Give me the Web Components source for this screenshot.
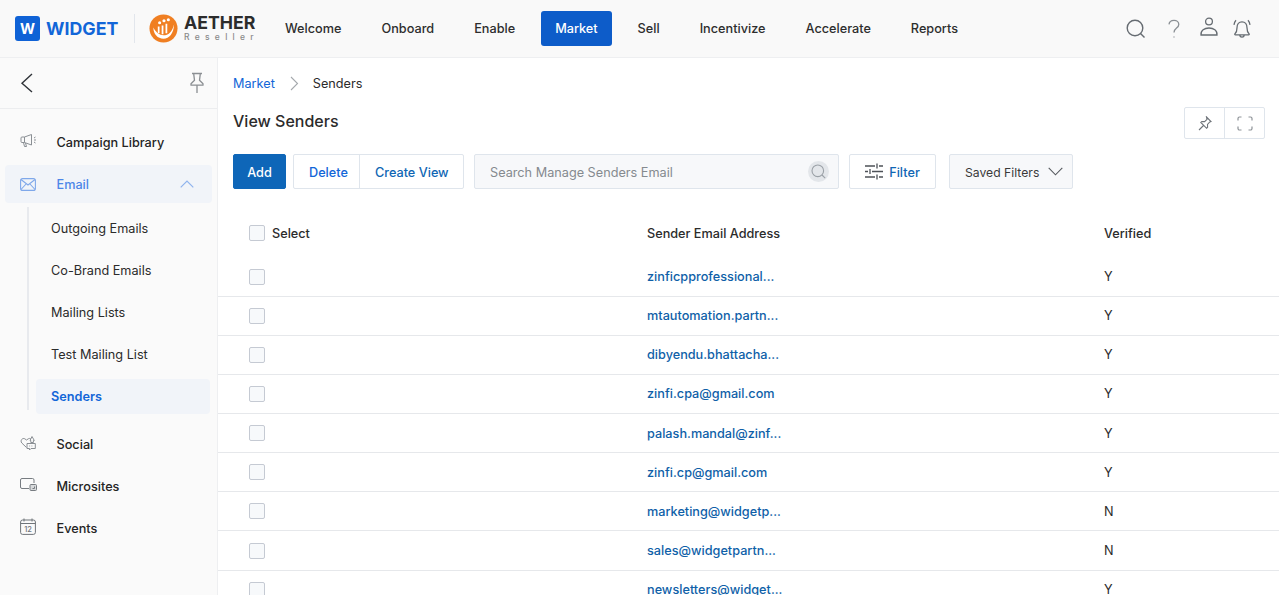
<!DOCTYPE html>
<html lang="en"><head><meta charset="utf-8"><title>View Senders</title>
<style>
html,body{margin:0;height:595px;overflow:hidden;background:#fff;font-family:Inter,"Liberation Sans",sans-serif;font-size:12.7px;color:#2b2b2b}
</style></head><body>
<app-shell></app-shell>
<script>
const ic={
 back:'<svg width="14" height="20" viewBox="0 0 14 20" fill="none" stroke="#2f3338" stroke-width="1.4"><path d="M12 1 2 10.2 12 19"/></svg>',
 pin:'<svg width="16" height="22" viewBox="0 0 16 22" fill="none" stroke="#8b8f93" stroke-width="1.3" stroke-linejoin="round"><path d="M3 1.500h10M4.800 1.500v1.200l.7 5.600L2 11.800v1.400h12v-1.400l-3.500-3.500.7-5.600V1.500M8 13.200V21"/></svg>',
 search:'<svg width="20" height="20" viewBox="0 0 20 20" fill="none" stroke="#666c72" stroke-width="1.4"><circle cx="9" cy="9" r="7.800"/><path d="m14.500 14.500 4 4"/></svg>',
 help:'<svg width="14" height="20" viewBox="0 0 14 20" fill="none" stroke="#8a8f94" stroke-width="1.3"><path d="M2 5.400C2.300 3 4.400 1.400 7 1.400c2.700 0 4.800 1.800 4.800 4 0 3.700-4.800 3.600-4.800 8"/><path d="M7 17.400v1.300" stroke-dasharray="1 .6"/></svg>',
 user:'<svg width="20" height="20" viewBox="0 0 20 20" fill="none" stroke="#666c72" stroke-width="1.3"><circle cx="10" cy="4.500" r="3.400"/><path d="M2 18c-.5-4.600 3.500-7 8-7s8.500 2.400 8 7z"/></svg>',
 bell:'<svg width="22" height="22" viewBox="0 0 22 22" fill="none" stroke="#666c72" stroke-width="1.3"><path d="M4 15.800c1.700-1.500 2-3 2-6 0-3.500 2-6 5-6s5 2.500 5 6c0 3 .3 4.500 2 6 .5.500.2 1-.4 1H4.400c-.6 0-.9-.5-.4-1zM8.800 16.800c0 3 4.400 3 4.400 0M3 6.800C3.300 5 3.900 3.500 5 2.300M19 6.800C18.700 5 18.100 3.500 17 2.300"/></svg>',
 megaphone:'<svg width="17" height="15" viewBox="0 0 17 15" fill="none" stroke="#8a8f94" stroke-width="1"><path d="M11.500 1.500 4.500 4H2a1 1 0 0 0-1 1v3.500a1 1 0 0 0 1 1h2.500l7 2.500zM4.500 4v5.500M3.500 9.500l1 4h2l-1-3.400M14 5l1.500-1M14 7h2M14 9l1.500 1"/></svg>',
 mail:'<svg width="16" height="13" viewBox="0 0 16 13" fill="none" stroke="#7fa8ea" stroke-width="1.100"><rect x=".6" y=".6" width="14.800" height="11.800" rx="2"/><path d="m1 1.500 7 5.500 7-5.500M1 11.500l5-5.500M15 11.500l-5-5.500"/></svg>',
 social:'<svg width="16" height="16" viewBox="0 0 16 16" fill="none" stroke="#8a8f94" stroke-width="1"><path d="M6.500 12.500 1.800 8C-.2 5.500 2.500 2.500 4.800 3.800L6.500 5l1.800-1.200c1-.6 1.900-.4 2.500 0"/><path d="M10 5.500 12 1.500l2.300 4h-.9V7.500h-2.600V5.500zM7 8.500h8.300v5H11L9.500 15v-1.500H7z"/><path d="M9.300 11h.8M11.500 11h.8" /></svg>',
 micro:'<svg width="17" height="13" viewBox="0 0 17 13" fill="none" stroke="#777c81" stroke-width="1"><path d="M9 10.500H2a1.500 1.500 0 0 1-1.500-1.500V2A1.500 1.500 0 0 1 2 .5h10.500A1.500 1.500 0 0 1 14 2v3"/><rect x="10" y="6.500" width="6.500" height="6" rx="1" fill="#d8dadc"/><path d="M14.500 8.500v2h-2"/></svg>',
 cal:'<svg width="16" height="17" viewBox="0 0 16 17" fill="none" stroke="#6f7479" stroke-width="1"><rect x=".6" y="2" width="14.800" height="14.400" rx="2"/><path d="M.6 5.500h14.800M4 .5v3M12 .5v3"/><text x="8" y="14" font-size="7.500" text-anchor="middle" fill="#6f7479" stroke="none" font-family="Inter">12</text></svg>',
 pin2:'<svg width="14" height="15" viewBox="0 0 14 15" fill="none" stroke="#6f747a" stroke-width="1.100"><path d="m8.500 1 4.500 4.500-1.200.5-2.300 2.500.1 2.800-1 1L2.800 6.500l1-1 2.800.1L9 3.300zM5.500 9.500 1 14"/></svg>',
 full:'<svg width="16" height="15" viewBox="0 0 16 15" fill="none" stroke="#8d9297" stroke-width="1.200"><path d="M1 4.500V2.500A1.500 1.500 0 0 1 2.500 1h2M11.500 1h2A1.500 1.500 0 0 1 15 2.500v2M15 10.500v2a1.500 1.500 0 0 1-1.500 1.500h-2M4.500 14h-2A1.500 1.500 0 0 1 1 12.500v-2"/></svg>',
 sliders:'<svg width="18" height="17" viewBox="0 0 18 17" fill="none" stroke="#4d5157" stroke-width="1.300"><path d="M0 3h10M14 3h4M12 .5v5M0 8.500h3M7 8.500h11M5 6v5M0 14h10M14 14h4M12 11.500v5"/></svg>',
 chev:'<svg width="15" height="9" viewBox="0 0 15 9" fill="none" stroke="#55595e" stroke-width="1.100"><path d="m.7.8 6.800 7 6.800-7"/></svg>',
 up:'<svg width="14" height="8" viewBox="0 0 14 8" fill="none" stroke="#8fb3ee" stroke-width="1.200"><path d="M.7 7.300 7 1l6.300 6.300"/></svg>',
 crumb:'<svg width="9" height="15" viewBox="0 0 9 15" fill="none" stroke="#a5a9ad" stroke-width="1.100"><path d="m1 1 6.500 6.500L1 14"/></svg>',
 mini:'<svg width="15" height="15" viewBox="0 0 15 15" fill="none" stroke="#9ba1a7" stroke-width="1.100"><circle cx="6.800" cy="6.800" r="5.800"/><path d="m11 11 3.200 3.200"/></svg>',
 aether:'<svg width="29" height="29" viewBox="0 0 30 30"><circle cx="15" cy="15" r="14.500" fill="#f07f22"/><g fill="none" stroke="#fff" stroke-width="1.800"><path d="M4.500 14c0 7 4.500 11.500 10.500 11.500 6 0 10.500-5.500 11-15-2 8-6 11.500-11 11.500-4 0-8-3-10.500-8z" fill="#fff" stroke="none"/><path d="M10 20v-7M14 21v-9M18 20v-10"/></g><circle cx="11" cy="9" r="1.600" fill="#fff"/><circle cx="15.500" cy="7" r="1.600" fill="#fff"/><circle cx="20" cy="6" r="1.600" fill="#fff"/></svg>'
};
function def(name,css,html){
  customElements.define(name,class extends HTMLElement{
    constructor(){super();const s=this.attachShadow({mode:'open'});s.innerHTML=`<style>${css}</style>`+(typeof html==='function'?html(this):html);}
  });
}
def('brand-logos',`:host{display:flex;align-items:center;height:30px}
 .w{width:25px;height:25px;border-radius:3px;background:#0f62d6;color:#fff;font:700 14.500px/25px Inter,sans-serif;text-align:center}
 .wt{color:#1266d8;font:700 17.800px/1 Inter,sans-serif;margin-left:6px;width:73px;white-space:nowrap}
 .sep{width:1px;height:29px;background:#e2e6ec;margin:0 14px 0 15px}
 .ae{margin-left:6px;width:73px}.a{font:700 17.700px/16px Inter,sans-serif;color:#2c2c2c;white-space:nowrap}
 .r{font:500 8.500px/9px Inter,sans-serif;color:#8a8a8a;letter-spacing:5.300px;margin-top:2px;white-space:nowrap}`,
 ()=>`<div class="w">W</div><div class="wt">WIDGET</div><div class="sep"></div>${ic.aether}<div class="ae"><div class="a">AETHER</div><div class="r">Reseller</div></div>`);
def('top-nav',`:host{display:flex;gap:10px;margin-left:13px}
 a{display:block;padding:0 15px;height:35px;font:500 12.700px/35px Inter,sans-serif;color:#2d2d2d;border-radius:3px}
 a.on{background:#0d5cc9;color:#fff;padding:0 14.500px;margin:0 .5px}`,
 ()=>['Welcome','Onboard','Enable','Market','Sell','Incentivize','Accelerate','Reports'].map(t=>`<a class="${t==='Market'?'on':''}">${t}</a>`).join(''));
def('app-header',`:host{display:flex;align-items:center;height:58px;box-sizing:border-box;padding:0 14px 0 15px;background:#f9f9f9;border-bottom:1px solid #eeeff1}
 .i{margin-left:auto;display:flex;align-items:center;margin-right:12px}
 .i span{display:flex}.s{margin-right:21px}.h{margin-right:18px}.u{margin-right:12px;margin-top:-4px}`,
 ()=>`<brand-logos></brand-logos><top-nav></top-nav><div class="i"><span class="s">${ic.search}</span><span class="h">${ic.help}</span><span class="u">${ic.user}</span><span>${ic.bell}</span></div>`);
def('side-item',`:host{display:flex;align-items:center;height:42px;box-sizing:border-box;padding-left:20px;font:500 12.700px/15px Inter,sans-serif;color:#242424}
 .ic{width:36.500px;display:flex}.t{padding-top:1px}`,
 `<span class="ic"><slot name="icon"></slot></span><span class="t"><slot></slot></span>`);
def('sub-item',`:host{display:flex;align-items:center;height:42px;padding-left:15px;font:400 12.700px/15px Inter,sans-serif;color:#2b2b2b}
 .t{padding-top:1px}
 :host([on]){background:#f1f4f9;color:#1266d8;font-weight:600;height:35px;border-radius:4px;margin:3.500px 0;}`,`<span class="t"><slot></slot></span>`);
def('side-nav',`:host{display:block;width:218px;flex:none;box-sizing:border-box;background:#fafafa;border-right:1px solid #eeeff1;height:537px}
 .top{display:flex;justify-content:space-between;align-items:center;height:51px;box-sizing:border-box;padding:0 12px 0 20px;border-bottom:1px solid #ecedef}
 .list{padding-top:12px}
 .email{display:flex;align-items:center;height:38px;margin:2px 5px 3px;background:#f1f4f9;border-radius:4px;padding-left:15px;font:500 12.700px/15px Inter,sans-serif;color:#4d86e8}
 .email .ic{width:36.500px;display:flex}.email .t{padding-top:1px}.email .up{margin-left:auto;margin-right:18px;display:flex}
 .subs{margin-left:27px;padding-left:7px;margin-right:7px;border-left:2px solid #e8eaee;margin-top:5px;height:203px}
 .subs .in{margin-top:-1px}`,
 ()=>`<div class="top">${ic.back}${ic.pin}</div><div class="list">
 <side-item><span slot="icon">${ic.megaphone}</span>Campaign Library</side-item>
 <div class="email"><span class="ic">${ic.mail}</span><span class="t">Email</span><span class="up">${ic.up}</span></div>
 <div class="subs"><div class="in"><sub-item>Outgoing Emails</sub-item><sub-item>Co-Brand Emails</sub-item><sub-item>Mailing Lists</sub-item><sub-item>Test Mailing List</sub-item><sub-item on>Senders</sub-item></div></div>
 <div style="height:13px"></div>
 <side-item><span slot="icon">${ic.social}</span>Social</side-item>
 <side-item><span slot="icon">${ic.micro}</span>Microsites</side-item>
 <side-item><span slot="icon">${ic.cal}</span>Events</side-item></div>`);
def('bread-crumb',`:host{display:flex;align-items:center;height:50px;font:400 12.700px/15px Inter,sans-serif;color:#2b2b2b}
 a,span{padding-top:1px}a{color:#1266d8}svg{margin:0 14px 0 15px}`,()=>`<a>Market</a>${ic.crumb}<span>Senders</span>`);
def('title-bar',`:host{display:flex;align-items:flex-start;justify-content:space-between;height:46px}
 h1{margin:1px 0 0;font:500 16px/24px Inter,sans-serif;color:#2b2b2b}
 .g{display:flex;margin-top:-1px;border:1px solid #dfe5ec;border-radius:2px;height:32px;box-sizing:border-box}
 .g span{width:39px;display:flex;align-items:center;justify-content:center}.g span+span{border-left:1px solid #dfe5ec}`,
 ()=>`<h1>View Senders</h1><div class="g"><span>${ic.pin2}</span><span>${ic.full}</span></div>`);
def('tool-bar',`:host{display:flex;align-items:stretch;height:35px;font:500 12.700px/15px Inter,sans-serif}
 .b{display:flex;align-items:center;justify-content:center;box-sizing:border-box;border:1px solid #dfe5ec;border-radius:2px}
 .t{padding-top:2px}
 .add{width:53px;background:#0e66b8;border-color:#0e66b8;color:#fff}
 .grp{display:flex;margin-left:7px;width:171px;flex:none;border:1px solid #dfe5ec;border-radius:2px;box-sizing:border-box;color:#1266d8}
 .grp span{display:flex;align-items:center;padding:2px 15px 0;white-space:nowrap;flex:none}
 .grp span:first-child{padding-right:11px}
 .grp span+span{border-left:1px solid #dfe5ec;color:#0f66b4;padding-right:0}
 .srch{margin-left:10px;width:365px;background:#f7f8fa;justify-content:space-between;padding:0 9px 0 15px;color:#858a8f;font-weight:400}
 .o{width:21px;height:21px;border-radius:50%;background:#e3e6ea;display:flex;align-items:center;justify-content:center}
 .fl{margin-left:10px;width:87px;gap:6px;color:#0f66b4}
 .sv{margin-left:13px;width:124px;background:#f7f8fa;color:#3a3a3a;justify-content:flex-start;padding-left:15px;gap:9px;font-weight:400;font-size:12.200px}`,
 ()=>`<div class="b add"><span class="t">Add</span></div><div class="grp"><span>Delete</span><span>Create View</span></div>
 <div class="b srch"><span class="t">Search Manage Senders Email</span><span class="o">${ic.mini}</span></div>
 <div class="b fl">${ic.sliders}<span class="t">Filter</span></div><div class="b sv"><span class="t">Saved Filters</span>${ic.chev}</div>`);
def('check-box',`:host{display:block;width:16px;height:16px;box-sizing:border-box;background:#f7f9fb;border:1px solid #c5cad3;border-radius:2px}`,'');
def('sender-row',`:host{display:grid;grid-template-columns:429px 457px 1fr;align-items:center;height:39.150px;box-sizing:border-box;border-bottom:1px solid #e6e8eb;font:400 12.700px/15px Inter,sans-serif;color:#2b2b2b}
 .c{padding-left:31px}a{color:#0f5fa8;font-weight:500}`,
 h=>`<div class="c"><check-box></check-box></div><div><a>${h.getAttribute('email')}</a></div><div>${h.getAttribute('v')}</div>`);
def('sender-table',`:host{display:block;margin:0 -14px 0 -15px;padding-top:23px}
 .hd{display:grid;grid-template-columns:429px 457px 1fr;align-items:center;height:42px;margin-bottom:3.500px;font:500 12.700px/15px Inter,sans-serif;color:#2b2b2b}
 .c{padding-left:31px;display:flex;align-items:center;gap:7px}
 .x{padding-top:1px}`,
 ()=>`<div class="hd"><div class="c"><check-box></check-box><span class="x">Select</span></div><div class="x">Sender Email Address</div><div class="x">Verified</div></div>`+
 [['zinficpprofessional...','Y'],['mtautomation.partn...','Y'],['dibyendu.bhattacha...','Y'],['zinfi.cpa@gmail.com','Y'],['palash.mandal@zinf...','Y'],['zinfi.cp@gmail.com','Y'],['marketing@widgetp...','N'],['sales@widgetpartn...','N'],['newsletters@widget...','Y']].map(r=>`<sender-row email="${r[0]}" v="${r[1]}"></sender-row>`).join(''));
def('main-pane',`:host{display:block;flex:1;min-width:0;padding:0 14px 0 15px;overflow:hidden;height:537px;box-sizing:border-box}`,
 `<bread-crumb></bread-crumb><title-bar></title-bar><tool-bar></tool-bar><sender-table></sender-table>`);
def('app-shell',`:host{display:block;height:595px;overflow:hidden}.b{display:flex}`,
 `<app-header></app-header><div class="b"><side-nav></side-nav><main-pane></main-pane></div>`);
</script></body></html>
